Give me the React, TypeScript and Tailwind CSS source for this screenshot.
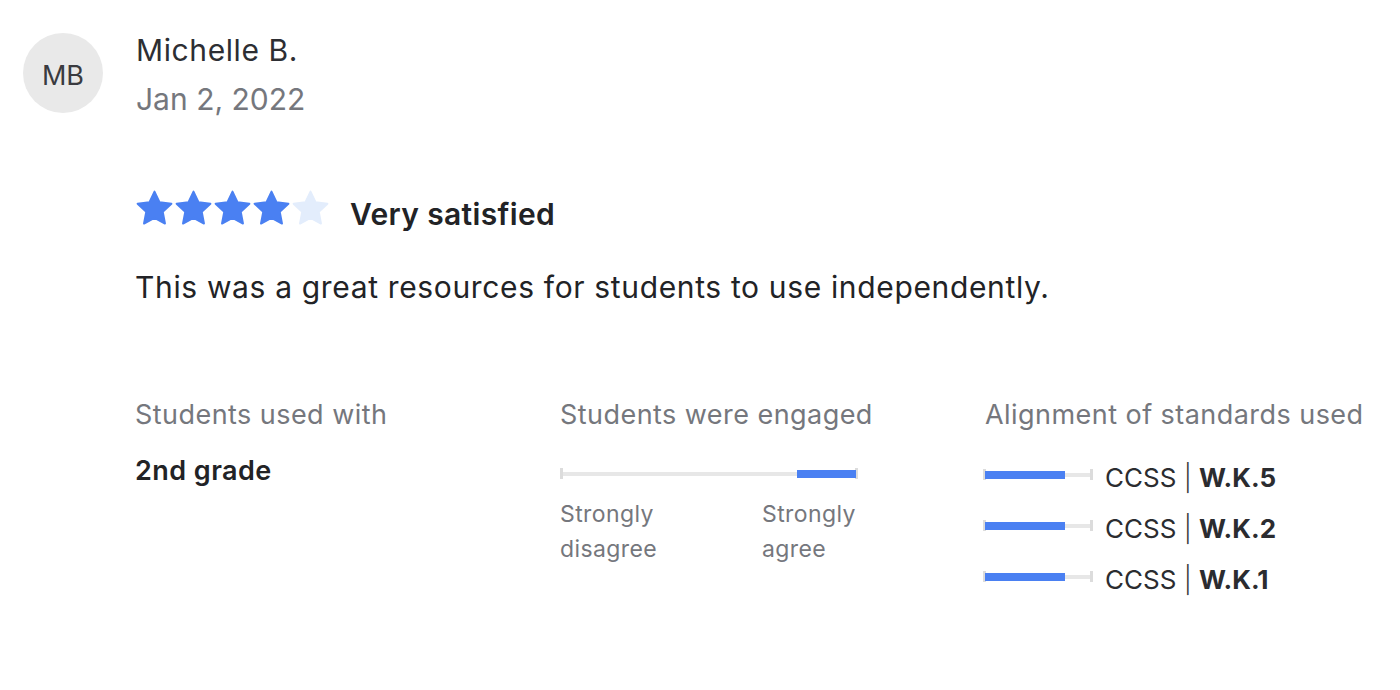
const stars = [true, true, true, true, false];

const standards = ["W.K.5", "W.K.2", "W.K.1"];

function Star({ filled }: { filled: boolean }) {
  const color = filled ? "#4a80f2" : "#e3edfc";
  return (
    <svg viewBox="0 0 24 24" className="w-[39px] h-[39px]">
      <path
        d="M12 1.6l3.15 6.6 7.25.9-5.3 5 1.35 7.15-6.45-3.5-6.45 3.5 1.35-7.15-5.3-5 7.25-.9z"
        fill={color}
        stroke={color}
        strokeWidth="1.2"
        strokeLinejoin="round"
      />
    </svg>
  );
}

// track with end ticks and a blue filled range
function Bar({ from, to, width }: { from: number; to: number; width: number }) {
  return (
    <div className="relative h-[11px] shrink-0" style={{ width }}>
      <div className="absolute left-0 right-0 top-[4px] h-[4px] bg-[#e7e7e7]" />
      <div className="absolute left-0 top-0 h-[11px] w-[3px] bg-[#dcdcdc]" />
      <div className="absolute right-0 top-0 h-[11px] w-[3px] bg-[#dcdcdc]" />
      <div
        className="absolute top-[2px] h-[8px] bg-[#4a80f2]"
        style={{ left: from, width: to - from }}
      />
    </div>
  );
}

export default function App() {
  return (
    <div className="w-[1400px] h-[690px] bg-white font-['Inter',sans-serif] text-[#222326] pt-[33px]">
      <div className="flex items-start pl-[23px]">
        <div className="w-20 h-20 rounded-full bg-[#e9e9e9] flex items-center justify-center pt-[6px] text-[27px] text-[#3a3b40]">
          MB
        </div>
        <div className="ml-[33px] -mt-[1px]">
          <div className="text-[30px] leading-[36px] tracking-[0.6px] text-[#2d2e33]">Michelle B.</div>
          <div className="text-[30px] leading-[36px] mt-[13px] text-[#75777d]">Jan 2, 2022</div>
        </div>
      </div>

      <div className="pl-[135px]">
        <div className="flex items-start mt-[72px]">
          <div className="flex">
            {stars.map((f, i) => (
              <Star key={i} filled={f} />
            ))}
          </div>
          <span className="ml-[20px] mt-[7px] text-[30px] leading-[36px] tracking-[0.35px] font-semibold">
            Very satisfied
          </span>
        </div>

        <p className="mt-[37px] text-[30px] leading-[36px] tracking-[0.65px]">
          This was a great resources for students to use independently.
        </p>

        <div className="grid grid-cols-[425px_425px_1fr] mt-[93px]">
          <div>
            <div className="text-[27px] leading-[34px] tracking-[0.45px] text-[#75777d]">Students used with</div>
            <div className="mt-[22px] text-[27px] leading-[34px] tracking-[0.45px] font-semibold">2nd grade</div>
          </div>
          <div>
            <div className="text-[27px] leading-[34px] tracking-[0.45px] text-[#75777d]">Students were engaged</div>
            <div className="mt-[36px]">
              <Bar from={237} to={296} width={298} />
            </div>
            <div className="flex mt-[18px] text-[23px] leading-[35px] tracking-[0.4px] text-[#75777d]">
              <div className="w-[202px]">
                Strongly
                <br />
                disagree
              </div>
              <div>
                Strongly
                <br />
                agree
              </div>
            </div>
          </div>
          <div>
            <div className="text-[27px] leading-[34px] tracking-[0.45px] text-[#75777d]">
              Alignment of standards used
            </div>
            <div className="mt-[29px] -ml-[2px] flex flex-col gap-[17px]">
              {standards.map((s) => (
                <div key={s} className="flex items-start">
                  <div className="mt-[8px]">
                    <Bar from={2} to={82} width={110} />
                  </div>
                  <span className="ml-[12px] text-[26px] leading-[34px] text-[#2b2c30]">
                    CCSS <span className="text-[#3a3b40] font-light">|</span>{" "}
                    <span className="font-bold">{s}</span>
                  </span>
                </div>
              ))}
            </div>
          </div>
        </div>
      </div>
    </div>
  );
}
